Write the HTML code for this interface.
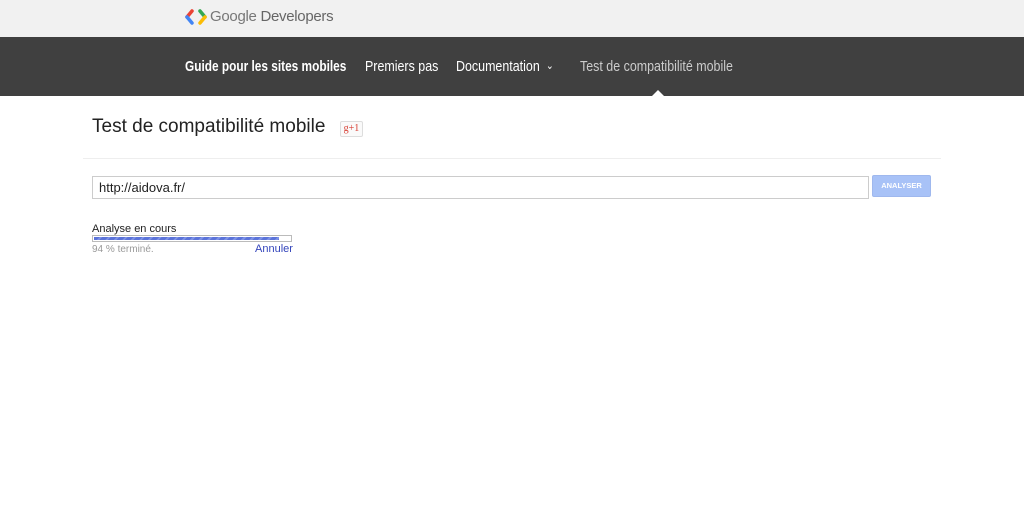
<!DOCTYPE html>
<html><head><meta charset="utf-8"><style>
*{margin:0;padding:0;box-sizing:border-box}
body{width:1024px;height:513px;background:#fff;font-family:"Liberation Sans",sans-serif;position:relative;overflow:hidden}
.top{position:absolute;left:0;top:0;width:1024px;height:37px;background:#f1f1f1}
.logo{position:absolute;left:185px;top:8px}
.gd{position:absolute;left:210px;top:8px;font-size:15px;color:#777;letter-spacing:-0.3px}
.nav{position:absolute;left:0;top:37px;width:1024px;height:59px;background:#404040}
.nav span{position:absolute;top:21px;font-size:15px;color:#fff;transform-origin:0 50%;transform:scaleX(0.83);white-space:nowrap}
.tri{position:absolute;left:652px;top:90px;width:0;height:0;border-left:6px solid transparent;border-right:6px solid transparent;border-bottom:6px solid #fff}
h1{position:absolute;left:92px;top:116px;font-size:19px;font-weight:normal;color:#222;transform-origin:0 50%;transform:scaleX(1.0)}
.gp{position:absolute;left:340px;top:121px;width:23px;height:16px;border:1px solid #ddd;border-radius:2px;font:10px "Liberation Serif",serif;color:#d73d32;text-align:center;line-height:14px;background:#fafafa}
.hr{position:absolute;left:83px;top:158px;width:858px;height:1px;background:#eee}
.inp{position:absolute;left:92px;top:176px;width:777px;height:23px;border:1px solid #ccc;font-size:13px;color:#222;padding-left:6px;line-height:21px}
.btn{position:absolute;left:872px;top:175px;width:59px;height:22px;background:#a8c2f7;border:1px solid #9fb8ee;border-radius:2px;color:#fff;font-size:7.5px;font-weight:bold;text-align:center;line-height:20px}
.lab{position:absolute;left:92px;top:223px;font-size:11px;color:#222}
.bar{position:absolute;left:92px;top:235px;width:200px;height:7px;border:1px solid #bbb;background:#fff}
.fill{position:absolute;left:1px;top:1px;width:185px;height:3px;background:repeating-linear-gradient(135deg,#5b73d9 0 4px,#7d92e6 4px 6px)}
.pct{position:absolute;left:92px;top:244px;font-size:10px;color:#999}
.ann{position:absolute;left:255px;top:243px;font-size:11px;color:#3344bb}
</style></head><body>
<div class="top"></div>
<svg class="logo" width="22" height="18" viewBox="0 0 22 18">
<path d="M7 3 L2 9" stroke="#ea4335" stroke-width="3.5" fill="none" stroke-linecap="round"/>
<path d="M2 9 L7 15" stroke="#4285f4" stroke-width="3.5" fill="none" stroke-linecap="round"/>
<path d="M15 3 L20 9" stroke="#34a853" stroke-width="3.5" fill="none" stroke-linecap="round"/>
<path d="M20 9 L15 15" stroke="#fbbc05" stroke-width="3.5" fill="none" stroke-linecap="round"/>
</svg>
<div class="gd">Google <span style="color:#666">Developers</span></div>
<div class="nav">
<span style="left:185px;font-weight:bold;transform:scaleX(0.79)">Guide pour les sites mobiles</span>
<span style="left:365px">Premiers pas</span>
<span style="left:456px">Documentation</span>
<span style="left:546px;top:22px;font-size:11px">&#8964;</span>
<span style="left:580px;color:#ccc">Test de compatibilité mobile</span>
</div>
<div class="tri"></div>
<h1>Test de compatibilité mobile</h1>
<div class="gp">g+1</div>
<div class="hr"></div>
<div class="inp">http://aidova.fr/</div>
<div class="btn">ANALYSER</div>
<div class="lab">Analyse en cours</div>
<div class="bar"><div class="fill"></div></div>
<div class="pct">94 % terminé.</div>
<div class="ann">Annuler</div>
</body></html>
